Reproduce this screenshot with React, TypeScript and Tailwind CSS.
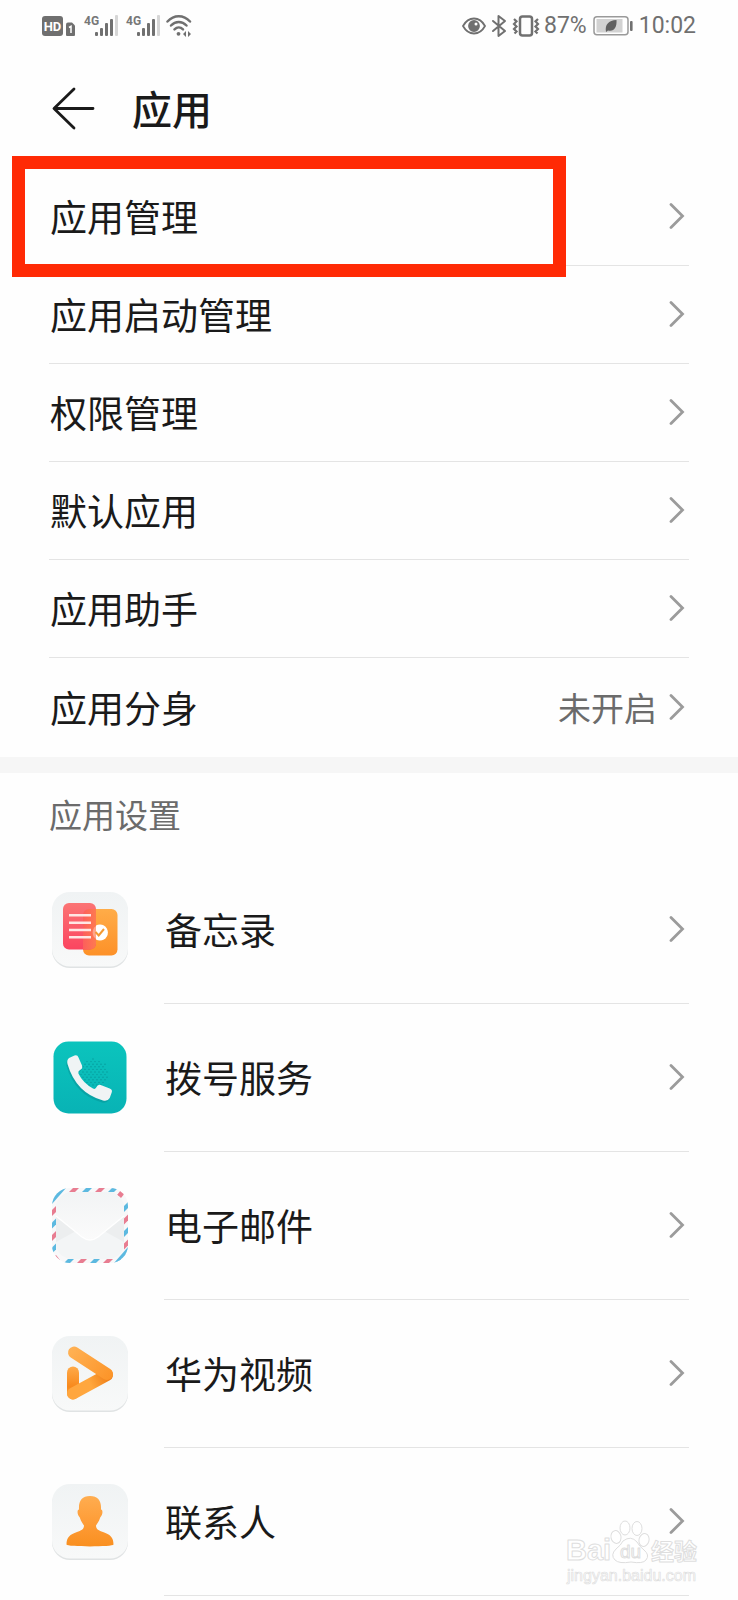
import React from "react";

const settings: { label: string; value?: string }[] = [
  { label: "应用管理" },
  { label: "应用启动管理" },
  { label: "权限管理" },
  { label: "默认应用" },
  { label: "应用助手" },
  { label: "应用分身", value: "未开启" },
];

function Chevron() {
  return (
    <svg className="mr-1 h-7 w-4 shrink-0" viewBox="0 0 16 28" fill="none" stroke="#9b9b9b" strokeWidth="2.8" aria-hidden="true">
      <path d="M2 1.500 13.500 13 2 24.500" strokeLinecap="round" strokeLinejoin="miter" />
    </svg>
  );
}

function Signal() {
  return (
    <div className="flex items-start">
      <span className="font-['Roboto'] text-[12px] leading-[12px] font-bold text-[#777]">4G</span>
      <svg className="-ml-1 h-[22px] w-[23px]" viewBox="0 0 23 22" aria-hidden="true">
        <g fill="#707070">
          <rect x="0" y="17" width="3" height="4" rx="1" />
          <rect x="5" y="13" width="3" height="8" rx="1" />
          <rect x="10" y="8" width="3" height="13" rx="1" />
          <rect x="15" y="4" width="3" height="17" rx="1" />
        </g>
        <rect x="20" y="0" width="3" height="21" rx="1" fill="#d6d6d6" />
      </svg>
    </div>
  );
}

function StatusBar() {
  return (
    <div className="flex h-[52px] items-center justify-between px-[42px] text-[#707070]">
      <div className="flex items-center">
        <svg className="h-[22px] w-[34px]" viewBox="0 0 34 22" aria-hidden="true">
          <rect x="0" y="1" width="21" height="20" rx="3" fill="#6f6f6f" />
          <text x="10.5" y="15.5" textAnchor="middle" fontFamily="Roboto, sans-serif" fontSize="13" fontWeight="700" fill="#fff">HD</text>
          <path d="M24 9.500a2 2 0 0 1 2-2h4l3 3v9.500a1 1 0 0 1-1 1h-7a1 1 0 0 1-1-1z" fill="#6f6f6f" />
          <path d="M27 12.500l2-1.200V18" fill="none" stroke="#fff" strokeWidth="1.500" />
        </svg>
        <div className="ml-2 flex items-center gap-2">
          <Signal />
          <Signal />
          <svg className="-ml-0.5 h-[22px] w-[26px]" viewBox="0 0 26 22" fill="none" stroke="#707070" strokeWidth="2.500" strokeLinecap="round" aria-hidden="true">
            <path d="M1.500 6.500C8-.5 17.500-.5 24 6.500" />
            <path d="M5 10.500c4.500-4.600 11-4.600 15.500 0" />
            <path d="M8.500 14.300c2.500-2.400 6-2.400 8.500 0" />
            <circle cx="12.500" cy="18.800" r="1.900" fill="#707070" stroke="none" />
            <path d="M20 16v6l-3-3zM22 16v6l3-3z" fill="#707070" stroke="none" />
          </svg>
        </div>
      </div>
      <div className="flex items-center">
        <svg className="h-[22px] w-[24px]" viewBox="0 0 24 22" fill="none" stroke="#707070" strokeWidth="1.800" aria-hidden="true">
          <path d="M1 11C6.500 1 17.500 1 23 11 17.500 21 6.500 21 1 11z" />
          <circle cx="12" cy="11" r="5" fill="#707070" />
          <circle cx="14" cy="9" r="1.500" fill="#fff" stroke="none" />
        </svg>
        <svg className="ml-[5px] h-[24px] w-[16px]" viewBox="0 0 16 24" fill="none" stroke="#707070" strokeWidth="2" strokeLinejoin="round" strokeLinecap="round" aria-hidden="true">
          <path d="M2 7l12 10-6.500 5V2L14 7 2 17" />
        </svg>
        <svg className="ml-[5px] h-[24px] w-[28px]" viewBox="0 0 28 24" fill="none" stroke="#707070" strokeWidth="2.500" aria-hidden="true">
          <rect x="8" y="2.500" width="12" height="19" rx="2.500" />
          <path d="M2 5l2.500 2.400L2 10l2.500 2.500L2 15l2.500 2.500-2 2M26 5l-2.500 2.400L26 10l-2.500 2.500L26 15l-2.500 2.500 2 2" strokeWidth="2.200" />
        </svg>
        <span className="ml-1 font-['Roboto'] text-[23px] leading-6">87%</span>
        <svg className="ml-[6px] h-[22px] w-[40px]" viewBox="0 0 40 22" aria-hidden="true">
          <rect x="1" y="1.700" width="34" height="18" rx="3" fill="#fff" stroke="#9a9a9a" strokeWidth="1.500" />
          <rect x="3.500" y="4" width="26" height="13.500" fill="#d2d2d2" />
          <path d="M13 17c-1.300-7.500 2.500-11.500 10.500-12 .5 7.500-2.500 12-8.500 10.500L13 17z" fill="#606060" />
          <rect x="37" y="6" width="2.600" height="10" rx="1" fill="#707070" />
        </svg>
        <time className="ml-[6px] font-['Roboto'] text-[23px] leading-6">10:02</time>
      </div>
    </div>
  );
}

function Tile({ id }: { id: string }) {
  return (
    <>
      <defs>
        <linearGradient id={id} x1="0" y1="0" x2="0" y2="1">
          <stop offset="0" stopColor="#f0f3f4" />
          <stop offset="1" stopColor="#f8f9f9" />
        </linearGradient>
      </defs>
      <rect x="0" y="2" width="76" height="74" rx="18" fill="#e0e3e4" />
      <rect x="0" y="0" width="76" height="74.500" rx="18" fill={`url(#${id})`} />
    </>
  );
}

function MemoIcon() {
  return (
    <>
      <Tile id="memoTile" />
      <defs>
        <linearGradient id="memoRed" x1="0" y1="0" x2="0" y2="1">
          <stop offset="0" stopColor="#fb7474" />
          <stop offset="1" stopColor="#fb4560" />
        </linearGradient>
        <linearGradient id="memoOrange" x1="0" y1="0" x2="0" y2="1">
          <stop offset="0" stopColor="#ffac48" />
          <stop offset="1" stopColor="#fd9128" />
        </linearGradient>
        <linearGradient id="memoOverlap" x1="0" y1="0" x2="1" y2="0">
          <stop offset="0" stopColor="#fc5f5c" />
          <stop offset="1" stopColor="#fe7a50" />
        </linearGradient>
      </defs>
      <rect x="31" y="17" width="34.500" height="46.500" rx="6" fill="url(#memoOrange)" />
      <rect x="11" y="11" width="33" height="46.500" rx="6" fill="url(#memoRed)" />
      <path d="M31 23a6 6 0 0 1 6-6h7v34.500a6 6 0 0 1-6 6h-7z" fill="url(#memoOverlap)" />
      <path d="M17 23.300h22M17 30.700h22M17 38h22M17 45.300h22" stroke="#ffe6e4" strokeWidth="2.600" />
      <path d="M44 33.500a8 8 0 1 1 0 14z" fill="#fff" />
      <path d="M44 34a8 8 0 0 0 0 13z" fill="#ffa58c" />
      <path d="M43.500 40l3.200 3.500 5.300-6.500" fill="none" stroke="#f39a34" strokeWidth="2" />
    </>
  );
}

function PhoneIcon() {
  const dots: React.ReactNode[] = [];
  for (let r = 0; r < 11; r++) {
    for (let c = 0; c < 8; c++) {
      const x = 29 + c * 4 + (r % 2) * 2;
      const y = 19 + r * 2.6;
      if ((x - 42) ** 2 + (y - 33) ** 2 < 200) dots.push(<circle key={`${r}-${c}`} cx={x} cy={y} r="0.7" fill="#07999a" />);
    }
  }
  const handset =
    "M17 18l5.500-2.500q3-1 4 2l3.500 8q1 3-2 4.500-2.200 1-1.600 3.500Q31 43 41 48.500q2 1.200 3.200-1 1.500-3.500 4.500-2.500l9 3.500q3 1 2 4l-2 5.500Q56 61.500 51 60.500 24 53 15.500 24 14.500 20 17 18z";
  return (
    <>
      <defs>
        <linearGradient id="phoneBg" x1="0" y1="0" x2="0" y2="1">
          <stop offset="0" stopColor="#0bc4bd" />
          <stop offset="1" stopColor="#08b3b5" />
        </linearGradient>
      </defs>
      <rect x="1.500" y="1.500" width="73" height="72" rx="15" fill="url(#phoneBg)" />
      {dots}
      <path d={handset} fill="#07878c" opacity=".4" transform="translate(-1 2)" />
      <path d={handset} fill="#f0f4f5" />
    </>
  );
}

function MailIcon() {
  const stripes: React.ReactNode[] = [];
  const blue = "#5cb9e0";
  const red = "#e87d91";
  for (let i = 0; i < 5; i++) {
    const a = 17 + i * 13;
    const b = 18 + i * 12.5;
    if (a < 62) stripes.push(<path key={`t${i}`} d={`M${a} 4l4-4h6l-4 4z`} fill={i % 2 ? blue : red} />);
    stripes.push(<path key={`b${i}`} d={`M${a - 5} 75l4-4h6l-4 4z`} fill={i % 2 ? red : blue} />);
    stripes.push(<path key={`l${i}`} d={`M0 ${b + 4}l4-4v6l-4 4z`} fill={i % 2 ? blue : red} />);
    stripes.push(<path key={`r${i}`} d={`M72 ${b}l4-4v6l-4 4z`} fill={i % 2 ? red : blue} />);
  }
  return (
    <>
      <defs>
        <clipPath id="mailClip"><rect width="76" height="75" rx="18" /></clipPath>
        <linearGradient id="mailFlap" x1="0" y1="0" x2="0" y2="1">
          <stop offset="0" stopColor="#f2f4f5" />
          <stop offset="1" stopColor="#fbfbfb" />
        </linearGradient>
      </defs>
      <g clipPath="url(#mailClip)">
        <rect width="76" height="75" fill="#f8f8f9" />
        {stripes}
        <path d="M0 0h14L0 16z" fill={blue} />
        <path d="M76 75H62l14-16z" fill={blue} />
        <path d="M65 7l4-5 4 3-4 5zM4 67l4 5-3 3-5-5z" fill={red} />
      </g>
      <rect x="4" y="4" width="68" height="67" rx="16" fill="#f3f5f6" />
      <path d="M4 28l20 15L4 54zM72 28L52 43l20 11z" fill="#eceeef" />
      <path d="M4 28v-8A16 16 0 0 1 20 4h36a16 16 0 0 1 16 16v8L46 49q-8 6-16 0z" fill="url(#mailFlap)" />
      <path d="M4 28l26 21q8 6 16 0l26-21" fill="none" stroke="#fff" strokeWidth="1.500" />
    </>
  );
}

function VideoIcon() {
  return (
    <>
      <Tile id="videoTile" />
      <defs>
        <linearGradient id="videoArm" gradientUnits="userSpaceOnUse" x1="20" y1="14" x2="58" y2="44">
          <stop offset="0" stopColor="#ffb052" />
          <stop offset="1" stopColor="#fc9428" />
        </linearGradient>
        <linearGradient id="videoStem" gradientUnits="userSpaceOnUse" x1="15" y1="30" x2="15" y2="62">
          <stop offset="0" stopColor="#ffab4a" />
          <stop offset="0.65" stopColor="#f8891c" />
          <stop offset="1" stopColor="#ffa53c" />
        </linearGradient>
        <linearGradient id="videoBase" gradientUnits="userSpaceOnUse" x1="20" y1="57" x2="57" y2="40">
          <stop offset="0" stopColor="#ffa63e" />
          <stop offset="0.5" stopColor="#ffa73e" />
          <stop offset="1" stopColor="#ee7d16" />
        </linearGradient>
      </defs>
      <rect x="15" y="30.500" width="12" height="33" rx="6" fill="url(#videoStem)" />
      <g fill="none" strokeWidth="12" strokeLinecap="round">
        <path d="M21 57.500 55 39" stroke="url(#videoBase)" />
        <path d="M22 16.500 55 38" stroke="url(#videoArm)" />
      </g>
    </>
  );
}

function ContactsIcon() {
  return (
    <>
      <Tile id="contactsTile" />
      <defs>
        <linearGradient id="contactFill" x1="0" y1="0" x2="0" y2="1">
          <stop offset="0" stopColor="#ffad50" />
          <stop offset="0.5" stopColor="#fe9d38" />
          <stop offset="1" stopColor="#f98f20" />
        </linearGradient>
      </defs>
      <path d="M38 12c8 0 11.500 4.500 11 13.500 2.500.5 1.500 6-.8 8-1.200 4-3 6-4.200 8 0 4 3 5 7 6.500 7 2.500 10.500 5 10.500 12.500 0 2.500-47 2.500-47 0C14.500 53 18 50.500 25 48c4-1.500 7-2.500 7-6.500-1.200-2-3-4-4.200-8-2.300-2-3.300-7.500-.8-8C26.500 16.500 30 12 38 12z" fill="url(#contactFill)" />
    </>
  );
}

const apps = [
  { label: "备忘录", Icon: MemoIcon },
  { label: "拨号服务", Icon: PhoneIcon },
  { label: "电子邮件", Icon: MailIcon },
  { label: "华为视频", Icon: VideoIcon },
  { label: "联系人", Icon: ContactsIcon },
];

function Watermark() {
  return (
    <div className="pointer-events-none absolute right-[38px] bottom-[14px] w-[136px]" aria-hidden="true">
      <svg className="w-full" viewBox="0 0 136 66" fill="#fff" stroke="#dedede" strokeWidth="1" strokeLinejoin="round">
        <text x="2" y="40" fontFamily="Liberation Sans, sans-serif" fontSize="29" fontWeight="700">Bai</text>
        <ellipse cx="52" cy="17" rx="5" ry="6.500" transform="rotate(-12 52 17)" />
        <ellipse cx="61" cy="8" rx="5" ry="7" />
        <ellipse cx="73" cy="8.500" rx="5" ry="7" />
        <ellipse cx="80" cy="20" rx="5" ry="6.500" transform="rotate(15 80 20)" />
        <path d="M59 21q8-6 14 1 2 4 7 8 6 5 2 10-3 4-15 2-12 2-16-2-5-5 1-11 5-4 7-8z" />
        <text x="56" y="38" fontFamily="Liberation Sans, sans-serif" fontSize="19">du</text>
        <text x="87" y="40" fontFamily="Noto Sans CJK SC, sans-serif" fontSize="23" fontWeight="700">经验</text>
        <text x="3" y="61" fontFamily="Liberation Sans, sans-serif" fontSize="16" strokeWidth=".7">jingyan.baidu.com</text>
      </svg>
    </div>
  );
}

export default function App() {
  return (
    <main className="relative min-h-[1600px] w-full bg-[#fefefe] font-['Noto_Sans_CJK_SC',sans-serif] text-[#1a1a1a]">
      <StatusBar />
      <header className="flex h-[116px] items-center px-[49px] pb-1">
        <button type="button" aria-label="返回" className="flex">
          <svg className="h-[44px] w-[48px]" viewBox="0 0 48 44" fill="none" stroke="#1a1a1a" strokeWidth="2.800" strokeLinecap="round" strokeLinejoin="round" aria-hidden="true">
            <path d="M25 3 5 22.500 25 42M6 22.500h38" />
          </svg>
        </button>
        <h1 className="ml-[35px] text-[40px] leading-[48px] font-medium">应用</h1>
      </header>

      <nav className="relative">
        <ul className="px-[49px]">
          {settings.map(({ label, value }) => (
            <li key={label} className="h-[98px] border-b border-[#e4e4e4] last:h-[99px] last:border-0">
              <button type="button" className="flex h-full w-full items-center text-left">
                <span className="flex-1 pb-0.5 pl-px text-[37px] leading-[48px]">{label}</span>
                {value && <span className="mr-3 pb-0.5 text-[33px] leading-[48px] text-[#6b6b6b]">{value}</span>}
                <Chevron />
              </button>
            </li>
          ))}
        </ul>
        <div className="pointer-events-none absolute -top-3 right-[172px] left-3 h-[121px] border-[13px] border-[#ff2a05]" />
      </nav>

      <section className="border-t-[16px] border-[#f6f6f6]">
        <h2 className="flex h-[83px] items-center px-[49px] pb-0.5 text-[33px] leading-[48px] text-[#6b6b6b]">应用设置</h2>
        <ul className="pr-[49px] pl-[52px]">
          {apps.map(({ label, Icon }) => (
            <li key={label}>
              <button type="button" className="flex h-[148px] w-full items-center text-left">
                <svg className="mr-9 h-[76px] w-[76px] shrink-0" viewBox="0 0 76 76" aria-hidden="true">
                  <Icon />
                </svg>
                <span className="flex h-full flex-1 items-center border-b border-[#e4e4e4]">
                  <span className="flex-1 pb-0.5 pl-px text-[37px] leading-[48px]">{label}</span>
                  <Chevron />
                </span>
              </button>
            </li>
          ))}
        </ul>
      </section>
      <Watermark />
    </main>
  );
}
